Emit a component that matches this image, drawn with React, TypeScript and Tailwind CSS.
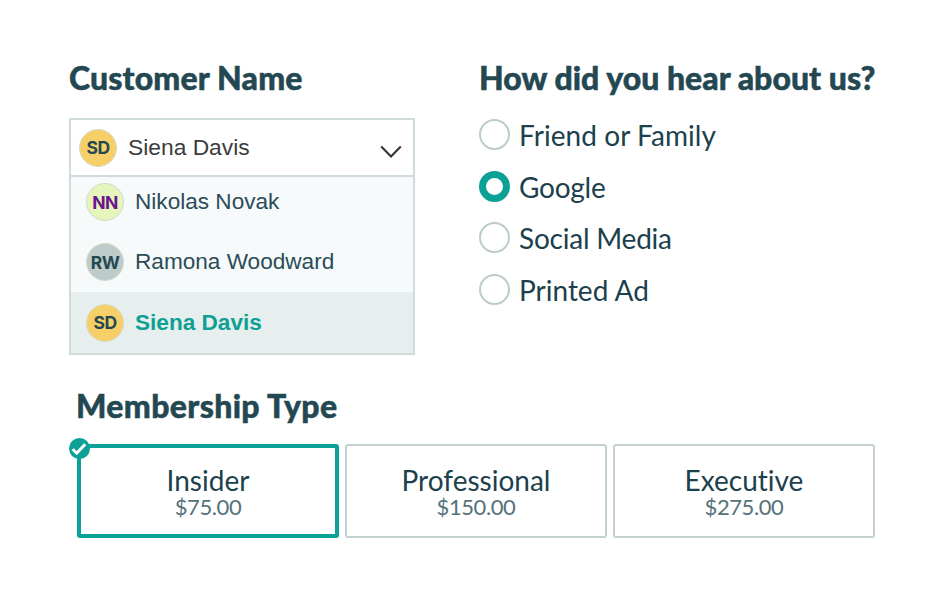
const lato = "font-['Lato',sans-serif] [font-variant-ligatures:none]";
const arial = "font-['Liberation_Sans',Arial,sans-serif]";

function Avatar({ initials, tone }: { initials: string; tone: string }) {
  return (
    <span
      className={`flex size-[38px] shrink-0 items-center justify-center rounded-full border border-[#d3dcc8] pt-px font-['Inter',sans-serif] text-[17.5px] leading-none font-bold tracking-[-0.6px] ${tone}`}
    >
      {initials}
    </span>
  );
}

function Heading({ children, spacing }: { children: string; spacing: string }) {
  return (
    <h2
      className={`text-[32px] leading-10 font-black whitespace-nowrap text-[#234851] [-webkit-text-stroke:0.5px_#234851] ${spacing}`}
    >
      {children}
    </h2>
  );
}

function CustomerSelect() {
  return (
    <div className={`mt-5 h-[237px] w-[346px] border-2 border-[#d0dbdb] bg-[#f6fafb] ${arial}`}>
      <div className="flex h-[57px] items-center border-b-2 border-[#d0dbdb] bg-white pl-2">
        <Avatar initials="SD" tone="bg-[#f6cf69] text-[#234851]" />
        <span className="ml-[11px] flex-1 pb-px text-[22.8px] leading-7 text-[#3c3c3c]">Siena Davis</span>
        <svg className="mt-2 mr-[11px]" width="22" height="14" viewBox="0 0 22 14" fill="none" stroke="#343434" strokeWidth="2.1">
          <path d="M1.2 1.5 11 11.5 20.8 1.5" />
        </svg>
      </div>
      <div className="flex h-[50px] items-center pl-[15px]">
        <Avatar initials="NN" tone="bg-[#e6f4bd] text-[#6b168b]" />
        <span className="ml-[11px] pb-px text-[22.6px] leading-7 text-[#2c4c58]">Nikolas Novak</span>
      </div>
      <div className="flex h-[65px] items-center pt-[5px] pl-[15px]">
        <Avatar initials="RW" tone="bg-[#bdcbcb] text-[#234851]" />
        <span className="ml-[11px] pb-px text-[22.6px] leading-7 text-[#2c4c58]">Ramona Woodward</span>
      </div>
      <div className="flex h-[61px] items-center bg-[#e7efee] pl-[15px]">
        <Avatar initials="SD" tone="bg-[#f6cf69] text-[#234851]" />
        <span className="ml-[11px] text-[22.6px] leading-7 font-bold text-[#0ea095]">Siena Davis</span>
      </div>
    </div>
  );
}

function Choice({ label, spacing, checked = false }: { label: string; spacing: string; checked?: boolean }) {
  return (
    <div className="flex h-[51.6px] items-center gap-[9px]">
      <span
        className={`size-[31px] shrink-0 rounded-full bg-white ${checked ? "border-[7px] border-[#0ba196]" : "border-2 border-[#bccbcb]"}`}
      />
      <span className={`pt-px text-[28px] leading-9 whitespace-nowrap text-[#1c414c] ${spacing}`}>{label}</span>
    </div>
  );
}

function Plan({ name, price, selected = false }: { name: string; price: string; selected?: boolean }) {
  return (
    <div
      className={`relative flex h-[94px] w-[262px] flex-col items-center justify-center rounded-[3px] pt-px ${selected ? "border-4 border-[#0ba196]" : "border-2 border-[#c4d1d1]"}`}
    >
      {selected && (
        <svg className="absolute -top-[10px] -left-[12px]" width="21" height="21" viewBox="0 0 21 21">
          <circle cx="10.5" cy="10.5" r="10.5" fill="#0ba196" />
          <path d="m3.7 11.2 4 4 8.5-8.9" fill="none" stroke="#fff" strokeWidth="3" />
        </svg>
      )}
      <span className="text-[28px] leading-[30px] text-[#1c414c]">{name}</span>
      <span className="text-[22px] leading-[23px] tracking-[-0.4px] text-[#55727a]">{price}</span>
    </div>
  );
}

export default function App() {
  return (
    <main className={`h-[590px] w-[945px] overflow-hidden bg-white pt-[58px] pl-[69px] ${lato}`}>
      <div className="flex h-[328px]">
        <section className="w-[410px]">
          <Heading spacing="tracking-[0.15px]">Customer Name</Heading>
          <CustomerSelect />
        </section>
        <section>
          <Heading spacing="tracking-[0.02px]">How did you hear about us?</Heading>
          <div className="mt-[11px]">
            <Choice label="Friend or Family" spacing="tracking-[0.06px]" />
            <Choice label="Google" spacing="tracking-[-0.25px]" checked />
            <Choice label="Social Media" spacing="tracking-[-0.22px]" />
            <Choice label="Printed Ad" spacing="tracking-normal" />
          </div>
        </section>
      </div>
      <section className="pl-[7px]">
        <Heading spacing="tracking-[0.35px]">Membership Type</Heading>
        <div className="mt-[18px] ml-px flex gap-[6px]">
          <Plan name="Insider" price="$75.00" selected />
          <Plan name="Professional" price="$150.00" />
          <Plan name="Executive" price="$275.00" />
        </div>
      </section>
    </main>
  );
}
